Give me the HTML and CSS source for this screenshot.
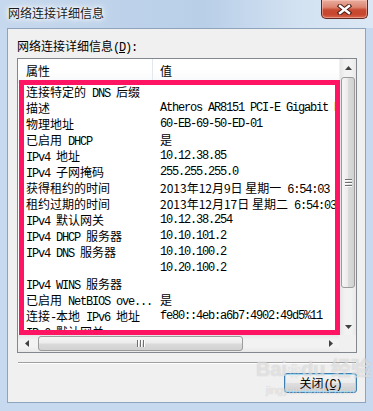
FILE: index.html
```html
<!DOCTYPE html>
<html lang="zh-CN">
<head>
    <meta charset="UTF-8">
    <title>网络连接详细信息</title>
    <link rel="stylesheet" href="styles.css">
</head>
<body>

<div class="window">
    <div class="titlebar">
        <span class="title">网络连接详细信息</span>
        <button class="close">
            <svg width="15" height="11" viewBox="0 0 15 11">
                <path d="M3 2 L12 9 M12 2 L3 9" stroke="#4a1d16" stroke-width="4.4" stroke-linecap="square" fill="none"/>
                <path d="M3 2 L12 9 M12 2 L3 9" stroke="#ffffff" stroke-width="2.4" stroke-linecap="square" fill="none"/>
            </svg>
        </button>
    </div>

    <div class="client">
        <div class="label">网络连接详细信息<span class="en">(<u>D</u>):</span></div>

        <div class="listview">
            <div class="list-main">
                <div class="list-head">
                    <div class="hcell">属性</div>
                    <div class="hcell val">值</div>
                </div>
                <div class="list-body">
                    <div class="row"><div class="cell">连接特定的<span class="en"> DNS </span>后缀</div><div class="cell val"></div></div>
                    <div class="row"><div class="cell">描述</div><div class="cell val en">Atheros AR8151 PCI-E Gigabit Ethernet Controller (NDIS 6.20)</div></div>
                    <div class="row"><div class="cell">物理地址</div><div class="cell val en">60-EB-69-50-ED-01</div></div>
                    <div class="row"><div class="cell">已启用<span class="en"> DHCP</span></div><div class="cell val">是</div></div>
                    <div class="row"><div class="cell"><span class="en">IPv4 </span>地址</div><div class="cell val en">10.12.38.85</div></div>
                    <div class="row"><div class="cell"><span class="en">IPv4 </span>子网掩码</div><div class="cell val en">255.255.255.0</div></div>
                    <div class="row"><div class="cell">获得租约的时间</div><div class="cell val">2013年12月9日 星期一<span class="en"> 6:54:03</span></div></div>
                    <div class="row"><div class="cell">租约过期的时间</div><div class="cell val">2013年12月17日 星期二<span class="en"> 6:54:03</span></div></div>
                    <div class="row"><div class="cell"><span class="en">IPv4 </span>默认网关</div><div class="cell val en">10.12.38.254</div></div>
                    <div class="row"><div class="cell"><span class="en">IPv4 DHCP </span>服务器</div><div class="cell val en">10.10.101.2</div></div>
                    <div class="row"><div class="cell"><span class="en">IPv4 DNS </span>服务器</div><div class="cell val en">10.10.100.2</div></div>
                    <div class="row"><div class="cell"></div><div class="cell val en">10.20.100.2</div></div>
                    <div class="row"><div class="cell"><span class="en">IPv4 WINS </span>服务器</div><div class="cell val"></div></div>
                    <div class="row"><div class="cell">已启用<span class="en"> NetBIOS ove...</span></div><div class="cell val">是</div></div>
                    <div class="row"><div class="cell">连接<span class="en">-</span>本地<span class="en"> IPv6 </span>地址</div><div class="cell val en">fe80::4eb:a6b7:4902:49d5%11</div></div>
                    <div class="row"><div class="cell"><span class="en">IPv6 </span>默认网关</div><div class="cell val"></div></div>
                </div>
            </div>

            <div class="vscroll">
                <div class="arrow">
                    <svg width="7" height="4" viewBox="0 0 7 4"><polygon points="3.5,0 7,4 0,4" fill="#404040"/></svg>
                </div>
                <div class="vthumb">
                    <span class="grip"></span><span class="grip"></span><span class="grip"></span>
                </div>
                <div class="track"></div>
                <div class="arrow">
                    <svg width="7" height="4" viewBox="0 0 7 4"><polygon points="0,0 7,0 3.5,4" fill="#404040"/></svg>
                </div>
            </div>

            <div class="hscroll">
                <div class="arrow">
                    <svg width="4" height="7" viewBox="0 0 4 7"><polygon points="4,0 4,7 0,3.5" fill="#404040"/></svg>
                </div>
                <div class="hthumb">
                    <span class="grip"></span><span class="grip"></span><span class="grip"></span>
                </div>
                <div class="track"></div>
                <div class="arrow">
                    <svg width="4" height="7" viewBox="0 0 4 7"><polygon points="0,0 4,3.5 0,7" fill="#404040"/></svg>
                </div>
            </div>

            <div class="corner"></div>

            <!-- red marker drawn over the list -->
            <div class="mark"></div>
        </div>

        <div class="separator"></div>

        <div class="actions">
            <button class="btn">关闭<span class="en">(<u>C</u>)</span></button>
        </div>

        <div class="watermark">
            <div class="wm-logo">Bai<span class="paw">❀</span>du 经验</div>
            <div class="wm-url">jingyan.baidu.com</div>
        </div>
    </div>
</div>

</body>
</html>
```

FILE: styles.css
```css
body {
    margin: 0;
    background-color: #c6d9ee;
    font-family: "Noto Sans CJK SC", sans-serif;
    font-size: 12px;
    color: #000;
}
.en {
    font-family: "Liberation Mono", "Noto Sans CJK SC", monospace;
    letter-spacing: -1.2px;
}
.window {
    width: 373px;
    height: 411px;
    display: flex;
    flex-direction: column;
    overflow: hidden;
}

/* title bar */
.titlebar {
    height: 28px;
    flex: none;
    display: flex;
    align-items: flex-start;
    background: linear-gradient(to right, #c6d8ed 0%, #bdd2ea 35%, #b9cfe8 55%, #d3e2f2 80%, #dbe7f4 100%);
}
.title {
    padding: 5px 0 0 8px;
    line-height: 16px;
    font-size: 12px;
    color: #1a1a1a;
    text-shadow: 0 0 6px #fff, 0 0 3px #fff, 0 0 10px #fff;
}
.close {
    margin: 0 5px 0 auto;
    width: 47px;
    height: 19px;
    padding: 0;
    border: 1px solid #5e2a23;
    border-top: none;
    border-radius: 0 0 5px 5px;
    background: linear-gradient(#e9ad9f 0%, #dd8571 40%, #c94a32 55%, #c7462e 80%, #d8694f 100%);
    box-shadow: inset 0 0 0 1px rgba(255, 210, 200, 0.45);
    display: flex;
    align-items: center;
    justify-content: center;
}

/* client area */
.client {
    flex: 1;
    margin: 0 7px 8px;
    border: 1px solid #8ea3bc;
    background-color: #f0f0f0;
    display: flex;
    flex-direction: column;
    position: relative;
}
.label {
    margin: 10px 0 0 9px;
    line-height: 14px;
}

/* list view */
.listview {
    margin: 3px 0 0 9px;
    width: 340px;
    height: 295px;
    box-sizing: border-box;
    border: 1px solid #828790;
    background-color: #fff;
    display: grid;
    grid-template-columns: 1fr 17px;
    grid-template-rows: 1fr 17px;
    position: relative;
}
.list-main {
    min-width: 0;
    overflow: hidden;
}
.list-head {
    height: 24px;
    box-sizing: border-box;
    display: grid;
    grid-template-columns: 135px 1fr;
    border-bottom: 1px solid #e5e5e5;
    background: linear-gradient(#ffffff, #ffffff 50%, #f7f8fa);
}
.hcell {
    line-height: 23px;
    padding-left: 8px;
    border-right: 1px solid #e3e8ee;
}
.hcell.val {
    padding-left: 7px;
    border-right: none;
}
.list-body {
    padding-top: 1px;
}
.row {
    display: grid;
    grid-template-columns: 135px 1fr;
    height: 16px;
    line-height: 16px;
    white-space: nowrap;
}
.cell {
    overflow: hidden;
    padding-left: 8px;
}
.cell.val {
    padding-left: 7px;
}

/* scroll bars */
.vscroll {
    grid-row: 1 / 3;
    grid-column: 2;
    display: flex;
    flex-direction: column;
    background: linear-gradient(to right, #e6e6e6, #f2f2f2 30%, #f2f2f2 70%, #e8e8e8);
    border-left: 1px solid #f0f0f0;
    height: 276px;
}
.hscroll {
    grid-row: 2;
    grid-column: 1;
    display: flex;
    background: linear-gradient(#e6e6e6, #f2f2f2 30%, #f2f2f2 70%, #e8e8e8);
}
.arrow {
    flex: none;
    width: 17px;
    height: 17px;
    display: flex;
    align-items: center;
    justify-content: center;
}
.track {
    flex: 1;
}
.vthumb,
.hthumb {
    flex: none;
    box-sizing: border-box;
    border: 1px solid #9b9b9b;
    border-radius: 3px;
    display: flex;
    align-items: center;
    justify-content: center;
    gap: 1px;
}
.vthumb {
    margin: 1px 1px 0;
    height: 211px;
    flex-direction: column;
    background: linear-gradient(to right, #f6f6f6, #ececec 45%, #dadada 55%, #d2d2d2);
}
.hthumb {
    margin: 1px 0 1px 3px;
    width: 205px;
    background: linear-gradient(#f6f6f6, #ececec 45%, #dadada 55%, #d2d2d2);
}
.vthumb .grip {
    width: 7px;
    height: 1px;
    background-color: #6f6f6f;
    border-bottom: 1px solid #fff;
}
.hthumb .grip {
    width: 1px;
    height: 7px;
    background-color: #6f6f6f;
    border-right: 1px solid #fff;
}
.corner {
    grid-row: 2;
    grid-column: 2;
    background-color: #f0f0f0;
}
.mark {
    position: absolute;
    left: 1px;
    top: 21px;
    width: 321px;
    height: 255px;
    box-sizing: border-box;
    border: 5px solid #ff1464;
}

/* bottom */
.separator {
    margin: 9px 9px 0 10px;
    border-top: 1px solid #a0a0a0;
    border-bottom: 1px solid #ffffff;
}
.actions {
    display: flex;
    justify-content: flex-end;
    margin-top: 9px;
    padding-right: 8px;
}
.btn {
    width: 73px;
    height: 20px;
    padding: 0;
    border: 1px solid #3c7fb1;
    border-radius: 3px;
    background: linear-gradient(#f4f4f4, #ececec 48%, #dedede 52%, #d2d2d2);
    box-shadow: inset 0 0 0 1px #9fdcf8;
    font-family: "Noto Sans CJK SC", sans-serif;
    font-size: 12px;
    line-height: 18px;
    color: #000;
}
.watermark {
    position: absolute;
    left: 248px;
    top: 327px;
    white-space: nowrap;
    color: rgba(255, 255, 255, 0.5);
    text-shadow: 0 0 1px rgba(120, 120, 120, 0.4);
    pointer-events: none;
}
.wm-logo {
    font-family: "Liberation Sans", "Noto Sans CJK SC", sans-serif;
    font-weight: bold;
    font-size: 20px;
    line-height: 26px;
}
.paw {
    font-size: 14px;
}
.wm-url {
    font-family: "Liberation Sans", sans-serif;
    font-size: 11px;
    line-height: 12px;
    padding-left: 10px;
}
```
